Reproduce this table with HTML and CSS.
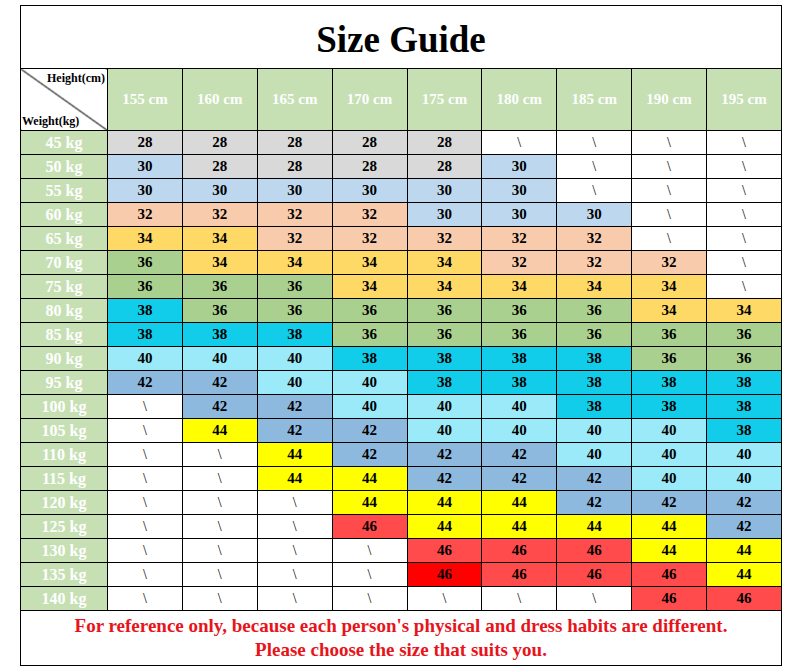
FILE: index.html
```html
<!DOCTYPE html>
<html lang="en">
<head>
<meta charset="utf-8">
<title>Size Guide</title>
<link rel="stylesheet" href="styles.css">
</head>
<body>
<div class="wrap">
<table class="guide">
<colgroup><col class="c-label"><col><col><col><col><col><col><col><col><col></colgroup>
<tr class="r-title"><td colspan="10" class="title">Size Guide</td></tr>
<tr class="r-head">
<td class="corner"><div class="corner-in"><span class="h">Height(cm)</span><span class="w">Weight(kg)</span></div></td>
<td class="hd">155 cm</td><td class="hd">160 cm</td><td class="hd">165 cm</td><td class="hd">170 cm</td><td class="hd">175 cm</td><td class="hd">180 cm</td><td class="hd">185 cm</td><td class="hd">190 cm</td><td class="hd">195 cm</td>
</tr>
<tr><td class="lb">45 kg</td><td class="s28">28</td><td class="s28">28</td><td class="s28">28</td><td class="s28">28</td><td class="s28">28</td><td class="na">\</td><td class="na">\</td><td class="na">\</td><td class="na">\</td></tr>
<tr><td class="lb">50 kg</td><td class="s30">30</td><td class="s28">28</td><td class="s28">28</td><td class="s28">28</td><td class="s28">28</td><td class="s30">30</td><td class="na">\</td><td class="na">\</td><td class="na">\</td></tr>
<tr><td class="lb">55 kg</td><td class="s30">30</td><td class="s30">30</td><td class="s30">30</td><td class="s30">30</td><td class="s30">30</td><td class="s30">30</td><td class="na">\</td><td class="na">\</td><td class="na">\</td></tr>
<tr><td class="lb">60 kg</td><td class="s32">32</td><td class="s32">32</td><td class="s32">32</td><td class="s32">32</td><td class="s30">30</td><td class="s30">30</td><td class="s30">30</td><td class="na">\</td><td class="na">\</td></tr>
<tr><td class="lb">65 kg</td><td class="s34">34</td><td class="s34">34</td><td class="s32">32</td><td class="s32">32</td><td class="s32">32</td><td class="s32">32</td><td class="s32">32</td><td class="na">\</td><td class="na">\</td></tr>
<tr><td class="lb">70 kg</td><td class="s36">36</td><td class="s34">34</td><td class="s34">34</td><td class="s34">34</td><td class="s34">34</td><td class="s32">32</td><td class="s32">32</td><td class="s32">32</td><td class="na">\</td></tr>
<tr><td class="lb">75 kg</td><td class="s36">36</td><td class="s36">36</td><td class="s36">36</td><td class="s34">34</td><td class="s34">34</td><td class="s34">34</td><td class="s34">34</td><td class="s34">34</td><td class="na">\</td></tr>
<tr><td class="lb">80 kg</td><td class="s38">38</td><td class="s36">36</td><td class="s36">36</td><td class="s36">36</td><td class="s36">36</td><td class="s36">36</td><td class="s36">36</td><td class="s34">34</td><td class="s34">34</td></tr>
<tr><td class="lb">85 kg</td><td class="s38">38</td><td class="s38">38</td><td class="s38">38</td><td class="s36">36</td><td class="s36">36</td><td class="s36">36</td><td class="s36">36</td><td class="s36">36</td><td class="s36">36</td></tr>
<tr><td class="lb">90 kg</td><td class="s40">40</td><td class="s40">40</td><td class="s40">40</td><td class="s38">38</td><td class="s38">38</td><td class="s38">38</td><td class="s38">38</td><td class="s36">36</td><td class="s36">36</td></tr>
<tr><td class="lb">95 kg</td><td class="s42">42</td><td class="s42">42</td><td class="s40">40</td><td class="s40">40</td><td class="s38">38</td><td class="s38">38</td><td class="s38">38</td><td class="s38">38</td><td class="s38">38</td></tr>
<tr><td class="lb">100 kg</td><td class="na">\</td><td class="s42">42</td><td class="s42">42</td><td class="s40">40</td><td class="s40">40</td><td class="s40">40</td><td class="s38">38</td><td class="s38">38</td><td class="s38">38</td></tr>
<tr><td class="lb">105 kg</td><td class="na">\</td><td class="s44">44</td><td class="s42">42</td><td class="s42">42</td><td class="s40">40</td><td class="s40">40</td><td class="s40">40</td><td class="s40">40</td><td class="s38">38</td></tr>
<tr><td class="lb">110 kg</td><td class="na">\</td><td class="na">\</td><td class="s44">44</td><td class="s42">42</td><td class="s42">42</td><td class="s42">42</td><td class="s40">40</td><td class="s40">40</td><td class="s40">40</td></tr>
<tr><td class="lb">115 kg</td><td class="na">\</td><td class="na">\</td><td class="s44">44</td><td class="s44">44</td><td class="s42">42</td><td class="s42">42</td><td class="s42">42</td><td class="s40">40</td><td class="s40">40</td></tr>
<tr><td class="lb">120 kg</td><td class="na">\</td><td class="na">\</td><td class="na">\</td><td class="s44">44</td><td class="s44">44</td><td class="s44">44</td><td class="s42">42</td><td class="s42">42</td><td class="s42">42</td></tr>
<tr><td class="lb">125 kg</td><td class="na">\</td><td class="na">\</td><td class="na">\</td><td class="s46">46</td><td class="s44">44</td><td class="s44">44</td><td class="s44">44</td><td class="s44">44</td><td class="s42">42</td></tr>
<tr><td class="lb">130 kg</td><td class="na">\</td><td class="na">\</td><td class="na">\</td><td class="na">\</td><td class="s46">46</td><td class="s46">46</td><td class="s46">46</td><td class="s44">44</td><td class="s44">44</td></tr>
<tr><td class="lb">135 kg</td><td class="na">\</td><td class="na">\</td><td class="na">\</td><td class="na">\</td><td class="s46r">46</td><td class="s46">46</td><td class="s46">46</td><td class="s46">46</td><td class="s44">44</td></tr>
<tr><td class="lb">140 kg</td><td class="na">\</td><td class="na">\</td><td class="na">\</td><td class="na">\</td><td class="na">\</td><td class="na">\</td><td class="na">\</td><td class="s46">46</td><td class="s46">46</td></tr>
<tr class="r-foot"><td colspan="10" class="foot">For reference only, because each person's physical and dress habits are different.<br>Please choose the size that suits you.</td></tr>
</table>
</div>
</body>
</html>
```

FILE: styles.css
```css
html, body {
  margin: 0;
  padding: 0;
  background: #ffffff;
}

.wrap {
  padding: 5px 0 0 20px;
}

.guide {
  border-collapse: collapse;
  table-layout: fixed;
  width: 762px;
  font-family: "Liberation Serif", "Times New Roman", serif;
  font-weight: bold;
  font-size: 15px;
  color: #000;
}

.guide col.c-label {
  width: 87px;
}

.guide td {
  border: 1px solid #000;
  padding: 0;
  text-align: center;
  vertical-align: middle;
  height: 23px;
  line-height: 17px;
}

.guide tr.r-title td {
  height: 63px;
}

.guide td.title {
  font-size: 37px;
  line-height: 42px;
  vertical-align: top;
  padding-top: 13px;
  box-sizing: border-box;
}

.guide tr.r-head td {
  height: 61px;
}

.guide td.hd {
  background: #c6e0b4;
  color: #ffffff;
  font-size: 15px;
}

.guide td.corner {
  background: #ffffff linear-gradient(to top right, transparent calc(50% - 1px), #000 50%, transparent calc(50% + 1px));
}

.corner-in {
  display: flex;
  flex-direction: column;
  justify-content: space-between;
  height: 61px;
  font-size: 12px;
  line-height: 14px;
}

.corner-in .h {
  text-align: right;
  padding: 2px 2px 0 0;
}

.corner-in .w {
  text-align: left;
  padding: 0 0 2px 1px;
}

.guide td.lb {
  background: #c6e0b4;
  color: #ffffff;
  font-size: 16px;
}

.guide td.na {
  background: #ffffff;
  font-weight: normal;
  font-size: 14px;
}

.s28 { background: #d9d9d9; }
.s30 { background: #bdd7ee; }
.s32 { background: #f8cbad; }
.s34 { background: #ffd966; }
.s36 { background: #a9d08e; }
.s38 { background: #12cde9; }
.s40 { background: #9beaf9; }
.s42 { background: #8eb9de; }
.s44 { background: #ffff00; }
.s46 { background: #ff4b4b; }
.s46r { background: #ff0000; }

.guide tr.r-foot td {
  height: 54px;
}

.guide td.foot {
  color: #e8141b;
  font-size: 19px;
  line-height: 24px;
}
```
